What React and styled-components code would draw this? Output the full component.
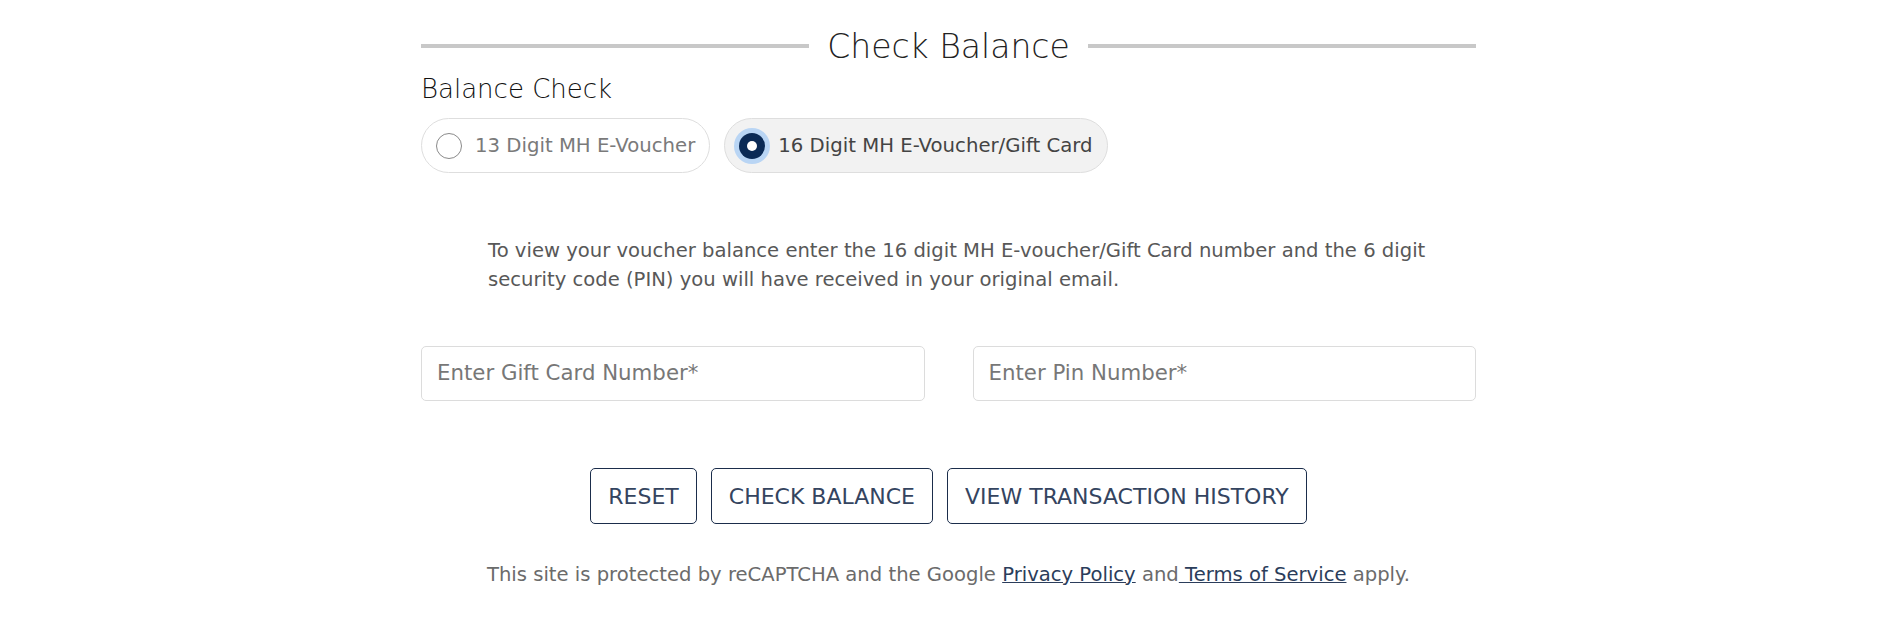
import React, { useState } from 'react';
import styled, { createGlobalStyle } from 'styled-components';

const GlobalStyle = createGlobalStyle`
  body {
    margin: 0;
    padding: 0;
    background: #ffffff;
    font-family: 'DejaVu Sans', 'Noto Sans', sans-serif;
    color: #333;
  }
`;

const Page = styled.div`
  max-width: 1055px;
  margin: 0 auto;
  padding-top: 27px;
`;

// heading with rules on both sides
const TitleRow = styled.div`
  display: flex;
  align-items: center;
  gap: 18px;
`;

const Rule = styled.span`
  flex: 1;
  height: 4px;
  margin-bottom: 3px;
  background: #c8c8c8;
`;

const Title = styled.h2`
  margin: 0;
  font-size: 33px;
  font-weight: 200;
  line-height: 40px;
  color: #222;
`;

const SubTitle = styled.h3`
  margin: 6px 0 0;
  font-size: 26px;
  font-weight: 200;
  line-height: 32px;
  color: #111;
`;

const RadioGroup = styled.div`
  display: flex;
  gap: 14px;
  margin-top: 13px;
`;

const Pill = styled.label`
  display: flex;
  align-items: center;
  gap: 13px;
  height: 55px;
  box-sizing: border-box;
  padding: 0 14px 0 14px;
  border: 1px solid #dedede;
  border-radius: 28px;
  background: ${({ checked }) => (checked ? '#f2f2f2' : '#ffffff')};
  cursor: pointer;
`;

const Dot = styled.span`
  position: relative;
  width: 26px;
  height: 26px;
  box-sizing: border-box;
  border-radius: 50%;
  border: ${({ checked }) => (checked ? 'none' : '1px solid #8a8a8a')};
  background: ${({ checked }) => (checked ? '#0b2a55' : '#ffffff')};
  box-shadow: ${({ checked }) => (checked ? '0 0 0 5px #b9d5f4' : 'none')};
  flex-shrink: 0;

  &::after {
    content: '';
    display: ${({ checked }) => (checked ? 'block' : 'none')};
    position: absolute;
    top: 8px;
    left: 8px;
    width: 10px;
    height: 10px;
    border-radius: 50%;
    background: #ffffff;
  }
`;

const PillText = styled.span`
  font-size: 19.7px;
  color: ${({ checked }) => (checked ? '#444' : '#7a7a7a')};
  white-space: nowrap;
`;

const Description = styled.p`
  margin: 63px 0 0;
  padding: 0 30px 0 67px;
  font-size: 19.6px;
  line-height: 29px;
  color: #585858;
`;

const Fields = styled.div`
  display: grid;
  grid-template-columns: 1fr 1fr;
  column-gap: 48px;
  margin-top: 52px;
`;

const Input = styled.input`
  height: 55px;
  box-sizing: border-box;
  padding: 0 15px 3px;
  border: 1px solid #dcdcdc;
  border-radius: 5px;
  font-family: inherit;
  font-size: 21.3px;
  color: #333;
  outline: none;

  &::placeholder {
    color: #777;
  }
`;

const Actions = styled.div`
  display: flex;
  justify-content: center;
  gap: 14px;
  margin-top: 67px;
`;

const Button = styled.button`
  height: 56px;
  padding: 0 17px;
  background: #ffffff;
  border: 1px solid #1b2d4b;
  border-radius: 5px;
  font-family: inherit;
  font-size: 22px;
  color: #34445f;
  cursor: pointer;

  &:hover {
    background: #f5f7fa;
  }
`;

const Notice = styled.p`
  margin: 37px 0 0;
  text-align: center;
  font-size: 19.6px;
  line-height: 28px;
  color: #6b6b6b;
`;

const Link = styled.a`
  color: #2b3d5b;
  text-decoration: underline;
`;

const options = [
  { id: '13', label: '13 Digit MH E-Voucher' },
  { id: '16', label: '16 Digit MH E-Voucher/Gift Card' },
];

const App = () => {
  const [type, setType] = useState('16');

  return (
    <>
      <GlobalStyle />
      <Page>
        <TitleRow>
          <Rule />
          <Title>Check Balance</Title>
          <Rule />
        </TitleRow>

        <SubTitle>Balance Check</SubTitle>
        <RadioGroup>
          {options.map((o) => (
            <Pill key={o.id} checked={type === o.id} onClick={() => setType(o.id)}>
              <Dot checked={type === o.id} />
              <PillText checked={type === o.id}>{o.label}</PillText>
            </Pill>
          ))}
        </RadioGroup>

        <Description>
          To view your voucher balance enter the 16 digit MH E-voucher/Gift Card number and the 6 digit
          security code (PIN) you will have received in your original email.
        </Description>

        <Fields>
          <Input type="text" placeholder="Enter Gift Card Number*" />
          <Input type="text" placeholder="Enter Pin Number*" />
        </Fields>

        <Actions>
          <Button>RESET</Button>
          <Button>CHECK BALANCE</Button>
          <Button>VIEW TRANSACTION HISTORY</Button>
        </Actions>

        <Notice>
          This site is protected by reCAPTCHA and the Google <Link href="#">Privacy Policy</Link> and
          <Link href="#"> Terms of Service</Link> apply.
        </Notice>
      </Page>
    </>
  );
};

export default App;
